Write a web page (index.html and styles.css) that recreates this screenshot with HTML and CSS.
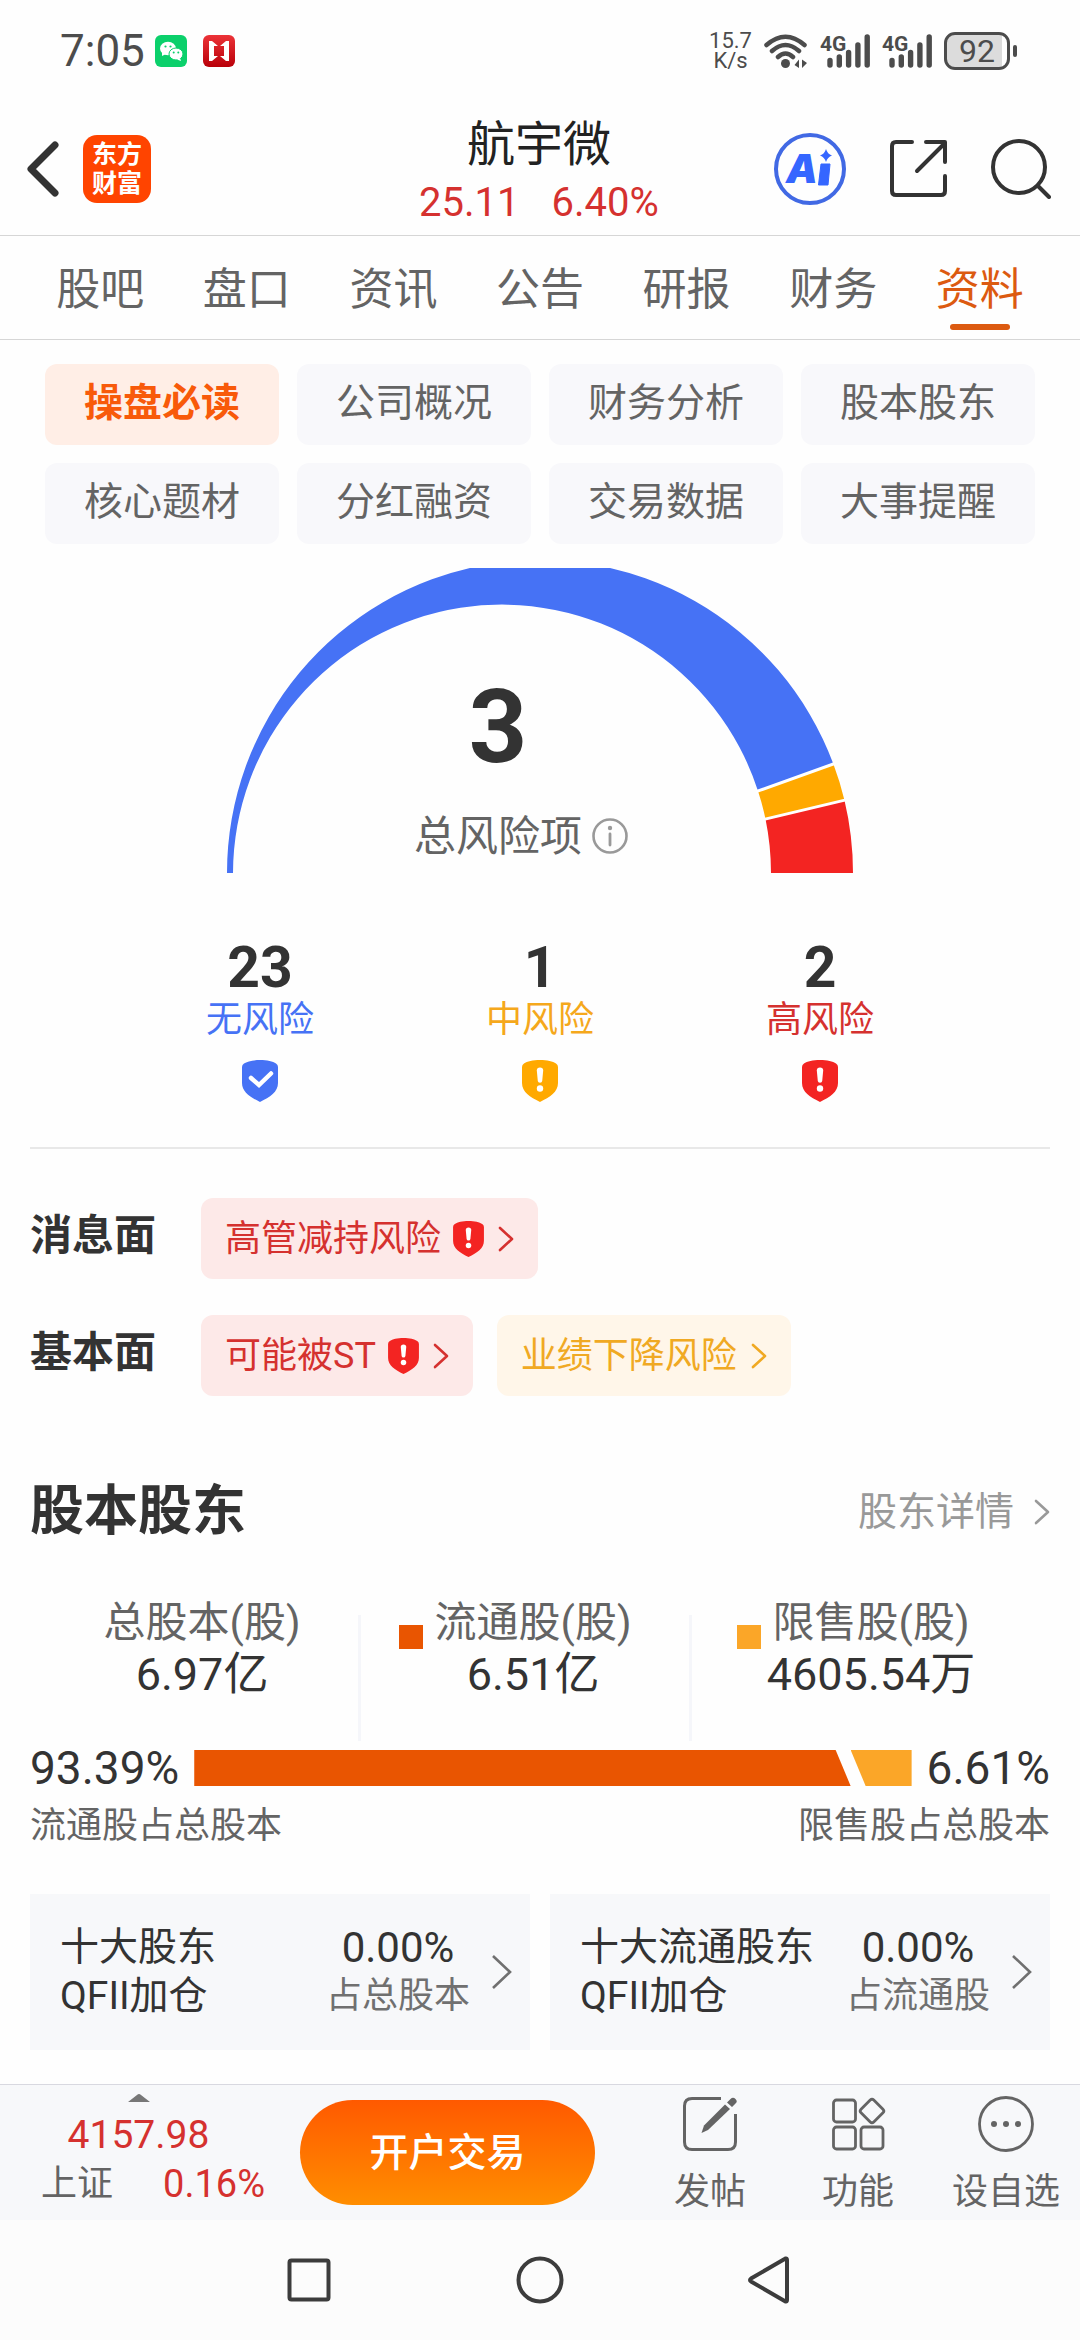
FILE: index.html
```html
<!DOCTYPE html>
<html lang="zh-CN">
<head>
<meta charset="utf-8">
<meta name="viewport" content="width=device-width, initial-scale=1">
<title>航宇微 - 资料</title>
<link rel="stylesheet" href="styles.css">
</head>
<body>
<svg class="sprite" aria-hidden="true">
  <symbol id="shield-alert" viewBox="0 0 36 42">
    <path d="M18 0C25 0 31 1.500 34 3.500Q36 4.800 36 7V23C36 32 28 37 18 42C8 37 0 32 0 23V7Q0 4.800 2 3.500C5 1.500 11 0 18 0Z" fill="currentColor"/>
    <path d="M14.800 10.500Q14.800 7.500 18 7.500T21.200 10.500L20.200 21Q20 22.800 18 22.800T15.800 21Z" fill="#fff"/>
    <circle cx="18" cy="28.500" r="3.200" fill="#fff"/>
  </symbol>
  <symbol id="shield-ok" viewBox="0 0 36 42">
    <path d="M18 0C25 0 31 1.500 34 3.500Q36 4.800 36 7V23C36 32 28 37 18 42C8 37 0 32 0 23V7Q0 4.800 2 3.500C5 1.500 11 0 18 0Z" fill="currentColor"/>
    <path d="M9 18L17 25L29 13.500" fill="none" stroke="#fff" stroke-width="4.500" stroke-linecap="round"/>
  </symbol>
  <symbol id="chevron" viewBox="0 0 16 26">
    <path d="M2 2L14 13L2 24" fill="none" stroke="currentColor" stroke-width="2.600" stroke-linecap="round" stroke-linejoin="round"/>
  </symbol>
</svg>

<div class="page">
  <div class="status">
    <span class="clock">7:05</span>
    <svg class="app" viewBox="0 0 32 32" aria-hidden="true">
      <rect width="32" height="32" rx="6" fill="#0bd06b"/>
      <ellipse cx="13" cy="13.500" rx="8" ry="6.800" fill="#fff"/>
      <path d="M7 17L7 21L11 19Z" fill="#fff"/>
      <ellipse cx="21" cy="19" rx="7" ry="6" fill="#fff" stroke="#0bd06b" stroke-width="1"/>
      <path d="M25 23L26 26L22 24.500Z" fill="#fff"/>
      <g fill="#0bd06b"><circle cx="10.500" cy="11.500" r="1.100"/><circle cx="15.500" cy="11.500" r="1.100"/><circle cx="18.700" cy="17.500" r="1"/><circle cx="23.300" cy="17.500" r="1"/></g>
    </svg>
    <svg class="app" viewBox="0 0 32 32" aria-hidden="true">
      <defs><linearGradient id="red-app" x2="0" y2="1"><stop stop-color="#ec3338"/><stop offset="1" stop-color="#b90009"/></linearGradient></defs>
      <rect width="32" height="32" rx="6" fill="url(#red-app)"/>
      <path d="M6 6H9L15 11H11V21H15L9 26H6ZM26 6H23L17 11H21V21H17L23 26H26Z" fill="#fff"/>
    </svg>
    <div class="status-right">
      <span class="speed">15.7<br>K/s</span>
      <svg class="wifi" viewBox="0 0 44 34" aria-hidden="true">
        <g fill="none" stroke="currentColor" stroke-width="4.500" stroke-linecap="round">
          <path d="M2.500 11Q21.500 -5.500 40.500 11M8 17Q21.500 5 35 17M14 23Q21.500 16 29 23"/>
        </g>
        <circle cx="21.500" cy="29.500" r="4.500" fill="currentColor"/>
        <path d="M35 25.500V34L30.500 31ZM38 25.500L43 29L38 34Z" fill="currentColor"/>
      </svg>
      <svg class="signal" viewBox="0 0 50 34">
        <path d="M10 26.500V31M19.300 23V31M28.600 18.500V31M37.900 11V31M47.200 3V31" fill="none" stroke="currentColor" stroke-width="5.400" stroke-linecap="round"/>
        <text x="0" y="17" font-size="21" font-weight="700" fill="currentColor">4G</text>
      </svg>
      <svg class="signal" viewBox="0 0 50 34">
        <path d="M10 26.500V31M19.300 23V31M28.600 18.500V31M37.900 11V31M47.200 3V31" fill="none" stroke="currentColor" stroke-width="5.400" stroke-linecap="round"/>
        <text x="0" y="17" font-size="21" font-weight="700" fill="currentColor">4G</text>
      </svg>
      <span class="battery">92</span>
    </div>
  </div>

  <header class="header">
    <div class="header-left">
      <button class="icon-btn" aria-label="返回">
        <svg width="32" height="56" viewBox="0 0 32 56"><path d="M28 4L4 28L28 52" fill="none" stroke="currentColor" stroke-width="7" stroke-linecap="round" stroke-linejoin="round"/></svg>
      </button>
      <a class="logo" href="#">东方<br>财富</a>
    </div>
    <div class="stock">
      <h1>航宇微</h1>
      <p><span>25.11</span><span>6.40%</span></p>
    </div>
    <div class="header-right">
      <button class="icon-btn ai" aria-label="Ai">
        <svg width="74" height="74" viewBox="0 0 74 74">
          <circle cx="37" cy="37" r="34" fill="none" stroke="#4169e4" stroke-width="4"/>
          <text x="13" y="51" font-family="Inter, sans-serif" font-size="40" font-weight="900" font-style="italic" fill="#3566ff">A</text>
          <path d="M48 32H57L55 53H45.500Z" fill="#3566ff" stroke="#3566ff" stroke-linejoin="round"/>
          <path d="M53 17Q54.500 22 59 23.500Q54.500 25 53 30Q51.500 25 47 23.500Q51.500 22 53 17Z" fill="#3566ff"/>
        </svg>
      </button>
      <button class="icon-btn" aria-label="分享">
        <svg width="58" height="58" viewBox="0 0 58 58" fill="none" stroke="currentColor" stroke-width="4" stroke-linecap="round" stroke-linejoin="round"><path d="M22 2H6Q2 2 2 6V51Q2 55 6 55H51Q55 55 55 51V36M36 2H55V22M54 4L27 31"/></svg>
      </button>
      <button class="icon-btn" aria-label="搜索">
        <svg width="60" height="60" viewBox="0 0 60 60" fill="none" stroke="currentColor" stroke-width="4" stroke-linecap="round"><circle cx="28" cy="28" r="26"/><path d="M47 47L58 58"/></svg>
      </button>
    </div>
  </header>

  <nav class="tabs">
    <a href="#">股吧</a>
    <a href="#">盘口</a>
    <a href="#">资讯</a>
    <a href="#">公告</a>
    <a href="#">研报</a>
    <a href="#">财务</a>
    <a href="#" class="active" aria-current="page">资料</a>
  </nav>

  <main class="content">
    <div class="chips">
      <button class="chip active">操盘必读</button>
      <button class="chip">公司概况</button>
      <button class="chip">财务分析</button>
      <button class="chip">股本股东</button>
      <button class="chip">核心题材</button>
      <button class="chip">分红融资</button>
      <button class="chip">交易数据</button>
      <button class="chip">大事提醒</button>
    </div>

    <section class="gauge">
      <svg class="arc" viewBox="226 568 628 305" aria-hidden="true">
        <path d="M227 873A313 313 0 0 1 833.200 763.500L758 791A269 269 0 0 0 233 873Z" fill="#4672f5"/>
        <path d="M833.200 763.500A313 313 0 0 1 844.400 800L765.500 819A269 269 0 0 0 758 791Z" fill="#ffa900"/>
        <path d="M844.400 800A313 313 0 0 1 853 873H771A269 269 0 0 0 765.500 819Z" fill="#f32422"/>
        <path d="M836 763L756 791.700M848 799.400L763 819.600" stroke="#fff" stroke-width="3"/>
      </svg>
      <div class="gauge-text">
        <strong>3</strong>
        <span>总风险项</span>
        <button class="icon-btn info" aria-label="说明">
          <svg width="36" height="36" viewBox="0 0 36 36"><circle cx="18" cy="18" r="16.500" fill="none" stroke="currentColor" stroke-width="2.600"/><path d="M18 16V27" stroke="currentColor" stroke-width="2.800" stroke-linecap="round"/><circle cx="18" cy="10" r="2.200" fill="currentColor"/></svg>
        </button>
      </div>
    </section>

    <ul class="levels">
      <li class="none"><strong>23</strong><span>无风险</span><svg class="shield"><use href="#shield-ok"/></svg></li>
      <li class="mid"><strong>1</strong><span>中风险</span><svg class="shield"><use href="#shield-alert"/></svg></li>
      <li class="high"><strong>2</strong><span>高风险</span><svg class="shield"><use href="#shield-alert"/></svg></li>
    </ul>

    <section class="risks">
      <div class="risk-row">
        <h3>消息面</h3>
        <a class="risk high" href="#">高管减持风险<svg class="shield-sm"><use href="#shield-alert"/></svg><svg class="chev"><use href="#chevron"/></svg></a>
      </div>
      <div class="risk-row">
        <h3>基本面</h3>
        <a class="risk high" href="#">可能被ST<svg class="shield-sm"><use href="#shield-alert"/></svg><svg class="chev"><use href="#chevron"/></svg></a>
        <a class="risk mid" href="#">业绩下降风险<svg class="chev"><use href="#chevron"/></svg></a>
      </div>
    </section>

    <section class="equity">
      <div class="section-head">
        <h2>股本股东</h2>
        <a href="#">股东详情<svg class="chev"><use href="#chevron"/></svg></a>
      </div>
      <div class="shares">
        <dl><dt><span>总股本(股)</span></dt><dd>6.97亿</dd></dl>
        <i class="rule"></i>
        <dl><dt><i class="key float"></i><span>流通股(股)</span></dt><dd>6.51亿</dd></dl>
        <i class="rule"></i>
        <dl><dt><i class="key locked"></i><span>限售股(股)</span></dt><dd>4605.54万</dd></dl>
      </div>
      <div class="ratio">
        <span>93.39%</span>
        <div class="bar"><i class="float"></i><i class="locked" style="width:8.5%"></i></div>
        <span>6.61%</span>
      </div>
      <div class="captions"><span>流通股占总股本</span><span>限售股占总股本</span></div>
      <div class="cards">
        <a class="card" href="#">
          <span class="card-name">十大股东<br>QFII加仓</span>
          <span class="card-value"><b>0.00%</b>占总股本</span>
          <svg class="chev-lg" viewBox="0 0 20 34"><path d="M1 1L18 17L1 33" fill="none" stroke="currentColor" stroke-width="2.600"/></svg>
        </a>
        <a class="card" href="#">
          <span class="card-name">十大流通股东<br>QFII加仓</span>
          <span class="card-value"><b>0.00%</b>占流通股</span>
          <svg class="chev-lg" viewBox="0 0 20 34"><path d="M1 1L18 17L1 33" fill="none" stroke="currentColor" stroke-width="2.600"/></svg>
        </a>
      </div>
    </section>
  </main>

  <footer class="toolbar">
    <button class="index">
      <svg width="22" height="8" viewBox="0 0 22 8"><path d="M0 8L9 1Q11 -1 13 1L22 8Z" fill="#777"/></svg>
      <span class="index-value">4157.98</span>
      <span class="index-row"><span>上证</span><em>0.16%</em></span>
    </button>
    <button class="trade">开户交易</button>
    <button class="tool">
      <svg width="56" height="56" viewBox="0 0 56 56"><path d="M39 2.500H10Q2.500 2.500 2.500 10V46Q2.500 53.500 10 53.500H46Q53.500 53.500 53.500 46V18" fill="none" stroke="currentColor" stroke-width="3"/><path d="M19.500 37L22 29.500L43 8.500L48 13L26 34Z" fill="currentColor"/><path d="M45 6.500L48.500 3Q51 0.500 53.500 3T53.500 7.500L50 11Z" fill="currentColor"/></svg>
      <span>发帖</span>
    </button>
    <button class="tool">
      <svg width="56" height="56" viewBox="0 0 56 56" fill="none" stroke="currentColor" stroke-width="2.800"><rect x="3.500" y="4" width="22" height="22" rx="3"/><rect x="3.500" y="31" width="22" height="22" rx="3"/><rect x="31" y="31" width="22" height="22" rx="3"/><rect x="33" y="6" width="18" height="18" rx="2.500" transform="rotate(45 42 15)"/></svg>
      <span>功能</span>
    </button>
    <button class="tool">
      <svg width="56" height="56" viewBox="0 0 56 56"><circle cx="28" cy="28" r="26.500" fill="none" stroke="currentColor" stroke-width="2.800"/><g fill="currentColor"><circle cx="16" cy="28" r="3"/><circle cx="28" cy="28" r="3"/><circle cx="40" cy="28" r="3"/></g></svg>
      <span>设自选</span>
    </button>
  </footer>

  <nav class="sysnav">
    <button class="icon-btn" aria-label="最近任务"><svg width="48" height="48" viewBox="0 0 48 48"><rect x="4.500" y="4.500" width="39" height="39" rx="2" fill="none" stroke="currentColor" stroke-width="4"/></svg></button>
    <button class="icon-btn" aria-label="主屏幕"><svg width="48" height="48" viewBox="0 0 48 48"><circle cx="24" cy="24" r="21.500" fill="none" stroke="currentColor" stroke-width="4"/></svg></button>
    <button class="icon-btn" aria-label="返回上一级"><svg width="48" height="48" viewBox="0 0 48 48"><path d="M38.500 2.500Q40 2 40 4V44Q40 46 38.500 45.500L4 25.500Q2 24 4 22.500Z" fill="none" stroke="currentColor" stroke-width="4" stroke-linejoin="round"/></svg></button>
  </nav>
</div>
</body>
</html>
```
FILE: styles.css
```css
* {
  box-sizing: border-box;
}

body {
  margin: 0;
  background: #fefefe;
  color: #333;
  font-family: Roboto, "Noto Sans CJK SC", sans-serif;
  font-size: 36px;
  line-height: 44px;
}

h1, h2, h3, p, ul, dl, dd {
  margin: 0;
  padding: 0;
}

a {
  color: inherit;
  text-decoration: none;
}

button {
  margin: 0;
  padding: 0;
  border: 0;
  background: none;
  color: inherit;
  font: inherit;
  cursor: pointer;
}

svg {
  display: block;
  flex: none;
}

em, i {
  font-style: normal;
}

.sprite {
  position: absolute;
  width: 0;
  height: 0;
}

.page {
  display: flex;
  flex-direction: column;
  min-height: 100vh;
}

.icon-btn {
  display: block;
}

/* Status bar */

.status {
  display: flex;
  align-items: center;
  height: 102px;
  padding: 0 70px 0 60px;
  color: #4c4c4c;
}

.clock {
  margin-right: 10px;
  font-size: 44px;
}

.app {
  width: 32px;
  height: 32px;
  margin-right: 16px;
}

.status-right {
  display: flex;
  align-items: center;
  gap: 12px;
  margin-left: auto;
}

.speed {
  font-size: 22px;
  line-height: 20px;
  text-align: center;
}

.wifi {
  width: 44px;
  height: 34px;
}

.signal {
  width: 50px;
  height: 34px;
}

.battery {
  position: relative;
  width: 66px;
  height: 38px;
  border: 3px solid #4c4c4c;
  border-radius: 11px;
  background: linear-gradient(90deg, #dcdcdc 92%, #fff 92%);
  font-size: 32px;
  line-height: 32px;
  text-align: center;
}

.battery::after {
  content: "";
  position: absolute;
  top: 10px;
  right: -10px;
  width: 4px;
  height: 12px;
  border-radius: 2px;
  background: #4c4c4c;
}

/* Header */

.header {
  display: grid;
  grid-template-columns: 1fr auto 1fr;
  align-items: center;
  height: 134px;
  padding: 0 29px 0 27px;
  border-bottom: 1px solid #d6d6d6;
}

.header-left,
.header-right {
  display: flex;
  align-items: center;
}

.header-left {
  gap: 24px;
}

.header-right {
  justify-content: flex-end;
  gap: 43px;
}

.logo {
  width: 68px;
  height: 68px;
  padding: 5px 0;
  border-radius: 14px;
  background: #ff4400;
  color: #fff;
  font-size: 25px;
  font-weight: 700;
  line-height: 29px;
  text-align: center;
}

.stock {
  padding-top: 8px;
  text-align: center;
}

.stock h1 {
  color: #222;
  font-size: 48px;
  font-weight: 400;
  line-height: 60px;
}

.stock p {
  display: flex;
  justify-content: center;
  gap: 32px;
  color: #d5312f;
  font-size: 40px;
  line-height: 56px;
}

/* Tabs */

.tabs {
  display: flex;
  height: 104px;
  padding: 0 27px;
  border-bottom: 1px solid #d6d6d6;
  color: #646464;
  font-size: 44px;
}

.tabs a {
  display: flex;
  flex: 1;
  flex-direction: column;
  align-items: center;
  padding-top: 20px;
  line-height: 68px;
}

.tabs .active {
  color: #dc5a10;
}

.tabs .active::after {
  content: "";
  width: 60px;
  height: 6px;
  border-radius: 3px;
  background: #dc5a10;
}

/* Content */

.content {
  flex: 1;
  padding: 24px 30px 34px;
}

.chips {
  display: grid;
  grid-template-columns: repeat(4, 1fr);
  gap: 18px;
  padding: 0 15px;
}

.chip {
  height: 81px;
  padding-bottom: 3px;
  border-radius: 12px;
  background: #f8f8fb;
  color: #646464;
  font-size: 39px;
}

.chip.active {
  background: #ffeee6;
  color: #f85a0a;
  font-weight: 700;
}

.gauge {
  display: grid;
  justify-content: center;
  margin-top: 24px;
}

.gauge > * {
  grid-area: 1 / 1;
}

.arc {
  width: 628px;
  height: 305px;
}

.gauge-text {
  display: grid;
  grid-template-columns: auto auto;
  align-content: end;
  align-items: center;
  justify-items: center;
  justify-self: start;
  gap: 0 10px;
  padding: 0 0 6px 188px;
}

.gauge-text strong {
  grid-column: 1;
  font-size: 102px;
  line-height: 110px;
}

.gauge-text span {
  grid-column: 1;
  margin-top: 25px;
  color: #646464;
  font-size: 42px;
  line-height: 60px;
}

.info {
  align-self: end;
  padding-bottom: 13px;
  color: #999;
}

.levels {
  display: grid;
  grid-template-columns: repeat(3, 280px);
  justify-content: center;
  margin-top: 67px;
  padding-bottom: 45px;
  border-bottom: 2px solid #e8e8e8;
  list-style: none;
}

.levels li {
  display: flex;
  flex-direction: column;
  align-items: center;
}

.levels strong {
  color: #333;
  font-size: 57px;
  line-height: 56px;
}

.levels span {
  margin: 2px 0 18px;
}

.levels .none { color: #4672f5; }
.levels .mid { color: #f5a81c; }
.levels .high { color: #d5312f; }

.shield {
  width: 36px;
  height: 42px;
}

.levels .mid .shield { color: #ffa900; }
.levels .high .shield,
.shield-sm { color: #f32422; }

.risks {
  display: flex;
  flex-direction: column;
  gap: 36px;
  margin-top: 49px;
}

.risk-row {
  display: flex;
  gap: 24px;
}

.risk-row h3 {
  width: 147px;
  font-size: 42px;
  line-height: 75px;
}

.risk {
  display: flex;
  align-items: center;
  height: 81px;
  padding: 0 24px;
  border-radius: 12px;
}

.risk.high {
  background: #fde9e8;
  color: #d5312f;
}

.risk.mid {
  background: #fff6e9;
  color: #f0a923;
}

.shield-sm {
  width: 31px;
  height: 36px;
  margin-left: 12px;
}

.chev {
  width: 16px;
  height: 26px;
  margin-left: 14px;
}

/* Share capital */

.section-head {
  display: flex;
  align-items: center;
  justify-content: space-between;
  margin-top: 76px;
}

.section-head h2 {
  font-size: 54px;
  line-height: 80px;
}

.section-head a {
  display: flex;
  align-items: center;
  gap: 6px;
  color: #999;
  font-size: 39px;
}

.shares {
  display: grid;
  grid-template-columns: 11fr 3px 11fr 3px 12fr;
  margin-top: 45px;
  font-size: 42px;
  line-height: 52px;
  text-align: center;
}

.shares dl:not(:last-child) {
  padding-left: 16px;
}

.shares dt {
  display: grid;
  grid-template-columns: 1fr auto 1fr;
  gap: 12px;
  color: #646464;
}

.shares dt span {
  grid-column: 2;
}

.shares dd {
  font-size: 45px;
}

.key {
  align-self: end;
  justify-self: end;
  width: 24px;
  height: 24px;
}

.float { background: #e95501; }
.locked { background: #fba628; }

.rule {
  height: 126px;
  margin-top: 18px;
  background: #f5f6fa;
}

.ratio {
  display: flex;
  align-items: center;
  gap: 15px;
  margin-top: 1px;
  font-size: 46px;
  line-height: 52px;
}

.bar {
  display: flex;
  flex: 1;
  height: 36px;
}

.bar .float {
  flex: 1;
  clip-path: polygon(0 0, calc(100% - 15px) 0, 100% 100%, 0 100%);
}

.bar .locked {
  clip-path: polygon(0 0, 100% 0, 100% 100%, 15px 100%);
}

.captions {
  display: flex;
  justify-content: space-between;
  margin-top: 10px;
  color: #646464;
}

.cards {
  display: grid;
  grid-template-columns: 1fr 1fr;
  gap: 20px;
  margin-top: 46px;
}

.card {
  display: flex;
  align-items: center;
  height: 156px;
  padding: 0 18px 0 30px;
  background: #f7f8fa;
  line-height: 49px;
}

.card-name {
  font-size: 39px;
}

.card-value {
  display: flex;
  flex-direction: column;
  align-items: center;
  margin: 0 22px 0 auto;
  color: #707070;
}

.card-value b {
  color: #333;
  font-size: 42px;
  font-weight: 400;
}

.chev-lg {
  width: 20px;
  height: 34px;
  color: #707070;
}

/* Bottom toolbar */

.toolbar {
  display: flex;
  align-items: center;
  height: 136px;
  border-top: 1px solid #d8d8e0;
  background: #f7f8fa;
}

.index {
  display: flex;
  flex-direction: column;
  align-items: center;
  width: 277px;
  padding-bottom: 4px;
}

.index-value {
  margin-top: 8px;
  color: #d5312f;
  font-size: 39px;
  line-height: 50px;
}

.index-row {
  display: flex;
  justify-content: space-between;
  width: 100%;
  padding: 0 12px 0 41px;
  color: #646464;
  line-height: 48px;
}

.index-row em {
  color: #d5312f;
  font-size: 38px;
}

.trade {
  flex: 1;
  height: 105px;
  margin: 0 41px 0 23px;
  border-radius: 53px;
  background: linear-gradient(#ff5900, #ff8e00);
  color: #fff;
  font-size: 39px;
  font-weight: 500;
}

.tool {
  display: flex;
  flex-direction: column;
  align-items: center;
  gap: 18px;
  width: 148px;
  padding-top: 5px;
  color: #646464;
}

.sysnav {
  display: grid;
  grid-template-columns: repeat(3, 231px);
  place-content: center;
  justify-items: center;
  height: 120px;
  background: #fcfcfc;
  color: #3c3c3c;
}
```
